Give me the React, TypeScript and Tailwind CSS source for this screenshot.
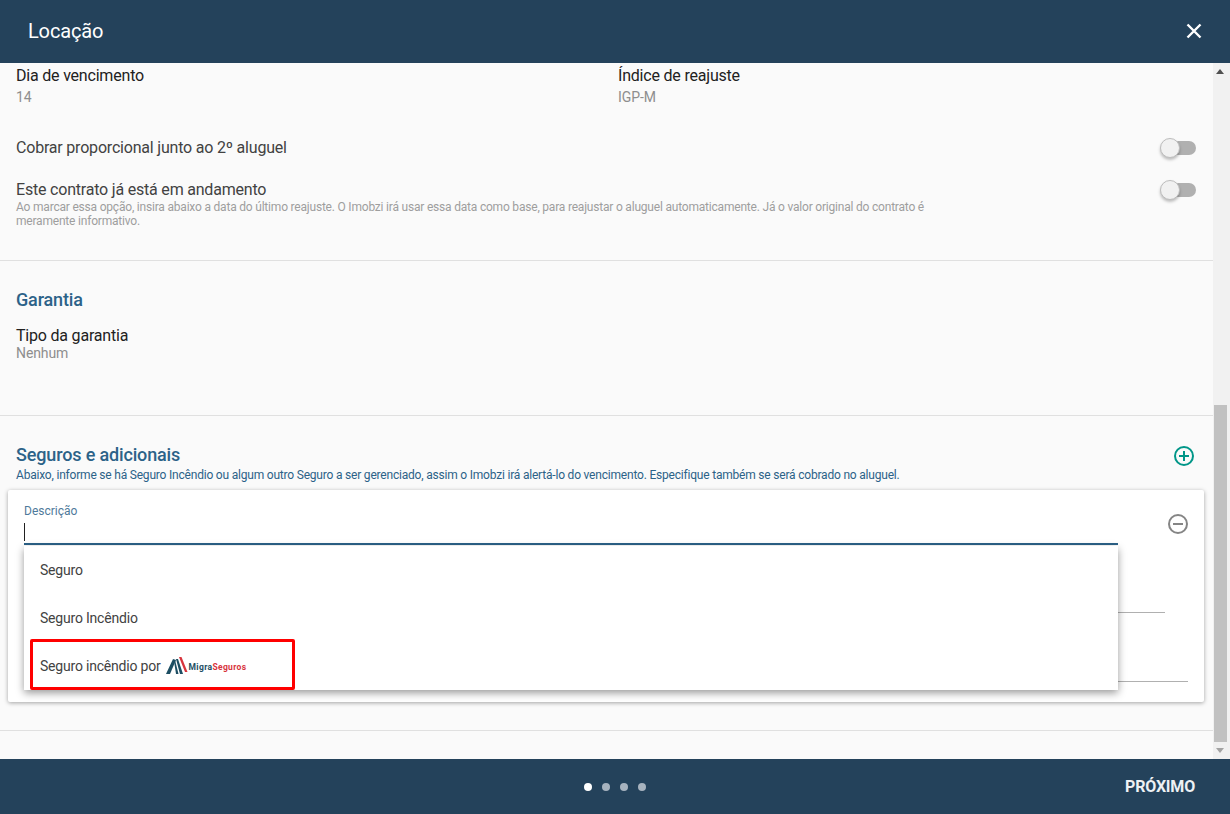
import { JSX } from "react";

function Toggle(): JSX.Element {
  return (
    <div className="relative w-[36px] h-[20px] shrink-0">
      <div className="absolute left-[3px] top-[3px] w-[33px] h-[14px] rounded-full bg-[#b0b0b0]" />
      <div className="absolute left-0 top-0 w-[20px] h-[20px] rounded-full bg-[#f1f1f1] border border-[#bdbdbd] shadow-[0_2px_3px_rgba(0,0,0,0.25)]" />
    </div>
  );
}

function MigraLogo(): JSX.Element {
  return (
    <div className="flex items-center ml-[5px]">
      <svg width="22" height="18" viewBox="0 0 22 18">
        <polygon points="0,17 7,2 10,3 4,17" fill="#1d4e63" />
        <polygon points="8,4 9,3 12.5,17 10,17" fill="#1d4e63" />
        <polygon points="10,2 12,2 17,17 14,17" fill="#1d4e63" />
        <polygon points="13,0 15.5,0 21.5,15 19,15" fill="#d8343c" />
      </svg>
      <span className="text-[8.5px] font-bold leading-none tracking-[0.35px] text-[#1d4e63] mt-[3px] ml-[1px]">
        Migra
      </span>
      <span className="text-[8.5px] font-bold leading-none tracking-[0.35px] text-[#d8343c] mt-[3px]">
        Seguros
      </span>
    </div>
  );
}

export default function App(): JSX.Element {
  return (
    <div className="flex flex-col w-[1230px] h-[814px] overflow-hidden bg-[#fafafa] font-['Roboto',sans-serif]">
      <header className="flex items-center justify-between h-[63px] shrink-0 pl-[28px] pr-[28px] bg-[#24425b] text-white">
        <h1 className="text-[20px] leading-[24px] tracking-[-0.15px] -mt-[1px]">Locação</h1>
        <svg width="16" height="16" viewBox="0 0 16 16" className="-mt-[1px]">
          <path d="M1.5 1.5 L14.5 14.5 M14.5 1.5 L1.5 14.5" stroke="#ffffff" strokeWidth="2.4" />
        </svg>
      </header>

      <div className="flex flex-1 min-h-0">
        <main className="flex-1 min-w-0 overflow-hidden">
          <section className="h-[198px] border-b border-[#e0e0e0] pt-[3px] px-[16px]">
            <div className="flex">
              <div className="w-[602px]">
                <p className="text-[16px] leading-[20px] tracking-[-0.2px] text-[#212121]">Dia de vencimento</p>
                <p className="text-[14px] leading-[20px] tracking-[-0.1px] text-[#8e8e8e] mt-[1px]">14</p>
              </div>
              <div>
                <p className="text-[16px] leading-[20px] tracking-[-0.2px] text-[#212121]">Índice de reajuste</p>
                <p className="text-[14px] leading-[20px] tracking-[-0.1px] text-[#8e8e8e] mt-[1px]">IGP-M</p>
              </div>
            </div>
            <div className="flex items-center justify-between mt-[31px] pr-[1px]">
              <p className="text-[16px] leading-[20px] tracking-[-0.2px] text-[#424242]">Cobrar proporcional junto ao 2º aluguel</p>
              <Toggle />
            </div>
            <div className="flex justify-between mt-[22px] pr-[1px]">
              <div className="w-[930px]">
                <p className="text-[16px] leading-[20px] tracking-[-0.2px] text-[#424242]">Este contrato já está em andamento</p>
                <p className="text-[12px] leading-[14px] tracking-[-0.2px] text-[#9e9e9e]">
                  Ao marcar essa opção, insira abaixo a data do último reajuste. O Imobzi irá usar essa data como base, para reajustar o aluguel automaticamente. Já o valor original do contrato é meramente informativo.
                </p>
              </div>
              <Toggle />
            </div>
          </section>

          <section className="h-[155px] border-b border-[#e0e0e0] pt-[28px] px-[16px]">
            <h2 className="text-[18px] leading-[22px] tracking-[-0.15px] font-medium text-[#2c6288]">Garantia</h2>
            <p className="text-[16px] leading-[20px] tracking-[-0.2px] text-[#212121] mt-[15px]">Tipo da garantia</p>
            <p className="text-[14px] leading-[14px] tracking-[-0.1px] text-[#8e8e8e]">Nenhum</p>
          </section>

          <section className="relative h-[315px] border-b border-[#e0e0e0] pt-[28px]">
            <div className="flex items-center justify-between h-[22px] px-[16px] pr-[18px]">
              <h2 className="text-[18px] leading-[22px] tracking-[-0.15px] font-medium text-[#2c6288]">Seguros e adicionais</h2>
              <svg width="22" height="22" viewBox="0 0 22 22" className="mt-[2px]">
                <circle cx="11" cy="11" r="9" fill="none" stroke="#009688" strokeWidth="2" />
                <path d="M11 6 V16 M6 11 H16" stroke="#009688" strokeWidth="2" />
              </svg>
            </div>
            <p className="text-[12px] leading-[14px] tracking-[-0.2px] text-[#2c6288] px-[16px] mt-[2px]">
              Abaixo, informe se há Seguro Incêndio ou algum outro Seguro a ser gerenciado, assim o Imobzi irá alertá-lo do vencimento. Especifique também se será cobrado no aluguel.
            </p>

            <div className="relative ml-[8px] w-[1196px] h-[212px] mt-[8px] bg-white rounded-[2px] shadow-[0_1px_4px_rgba(0,0,0,0.35)]">
              <div className="flex pt-[14px] pl-[16px]">
                <div className="w-[1094px]">
                  <p className="text-[12px] leading-[14px] text-[#4f7a9b]">Descrição</p>
                  <div className="h-[27px] border-b-2 border-[#2c6288] pt-[5px]">
                    <div className="w-px h-[18px] bg-[#212121]" />
                  </div>
                </div>
                <svg width="22" height="22" viewBox="0 0 22 22" className="ml-[49px] mt-[9px]">
                  <circle cx="11" cy="11" r="9" fill="none" stroke="#858585" strokeWidth="2" />
                  <path d="M6 11 H16" stroke="#858585" strokeWidth="2" />
                </svg>
              </div>
              <div className="ml-[16px] mt-[67px] w-[1141px] border-b border-[#b0b0b0]" />
              <div className="ml-[16px] mt-[68px] w-[1164px] border-b border-[#b0b0b0]" />

              <div className="absolute left-[16px] top-[56px] w-[1094px] h-[144px] bg-white shadow-[0_3px_8px_rgba(0,0,0,0.4)] text-[14px] tracking-[-0.2px] text-[#424242]">
                <div className="flex items-center h-[48px] pl-[16px]">Seguro</div>
                <div className="flex items-center h-[48px] pl-[16px]">Seguro Incêndio</div>
                <div className="flex items-center h-[48px] pl-[16px]">
                  Seguro incêndio por
                  <MigraLogo />
                </div>
                <div className="absolute left-[6px] top-[93px] w-[265px] h-[51px] border-[3px] border-[#ff0000] rounded-[2px]" />
              </div>
            </div>
          </section>
        </main>

        <div className="flex flex-col w-[17px] shrink-0 bg-[#f1f1f1] pr-[3px]">
          <div className="flex items-center justify-center h-[17px]">
            <svg width="8" height="5" viewBox="0 0 8 5">
              <polygon points="4,0 8,5 0,5" fill="#505050" />
            </svg>
          </div>
          <div className="flex-1" />
          <div className="h-[337px] ml-[1px] bg-[#c1c1c1]" />
          <div className="flex items-center justify-center h-[17px]">
            <svg width="8" height="5" viewBox="0 0 8 5">
              <polygon points="0,0 8,0 4,5" fill="#a3a3a3" />
            </svg>
          </div>
        </div>
      </div>

      <footer className="relative flex items-center justify-end h-[55px] shrink-0 pr-[35px] bg-[#24425b]">
        <div className="absolute left-[584px] top-[24px] flex gap-[10px]">
          <span className="w-[8px] h-[8px] rounded-full bg-white" />
          <span className="w-[8px] h-[8px] rounded-full bg-[#a7b3bf]" />
          <span className="w-[8px] h-[8px] rounded-full bg-[#a7b3bf]" />
          <span className="w-[8px] h-[8px] rounded-full bg-[#a7b3bf]" />
        </div>
        <button className="text-[16px] leading-[20px] tracking-[-0.2px] font-bold text-[#eef1f4] mt-[1px]">PRÓXIMO</button>
      </footer>
    </div>
  );
}
